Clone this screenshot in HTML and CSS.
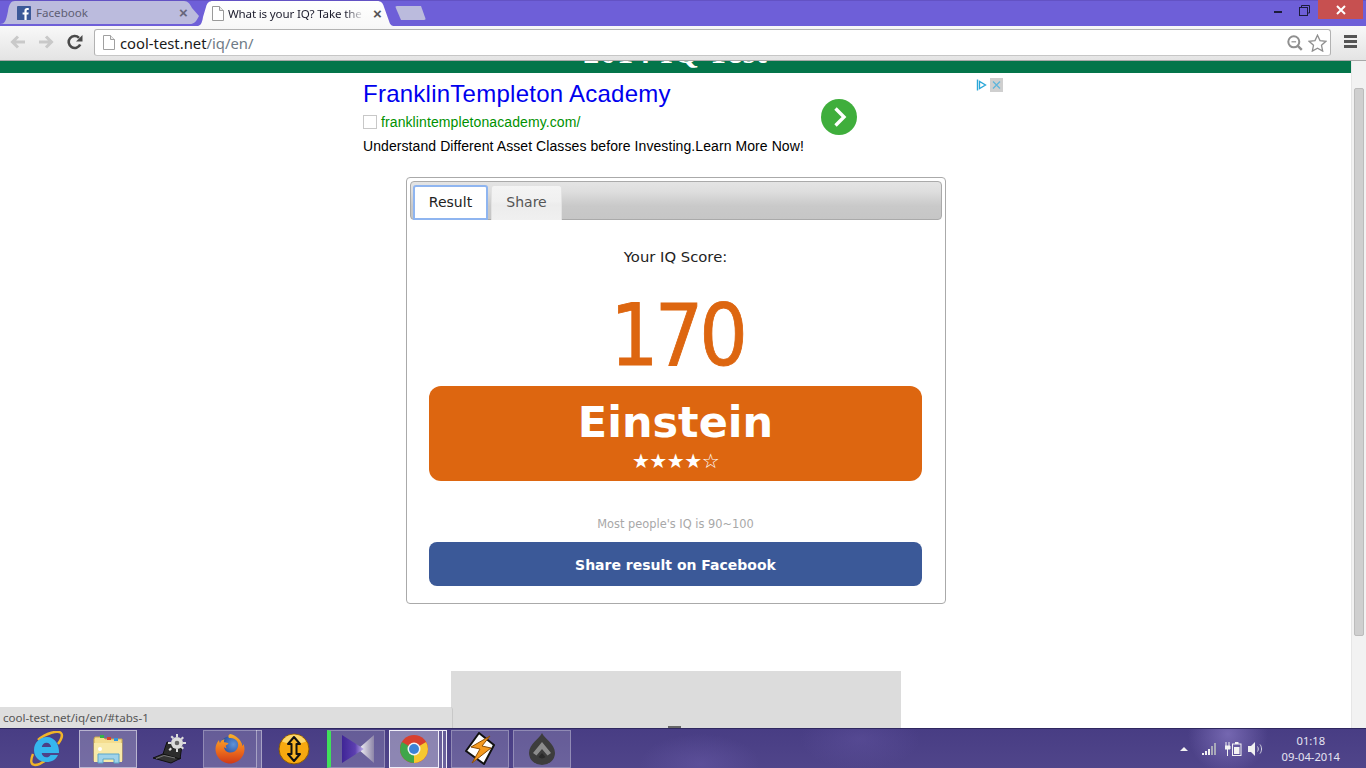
FILE: index.html
```html
<!DOCTYPE html>
<html lang="en">
<head>
<meta charset="utf-8">
<title>What is your IQ? Take the test</title>
<link rel="stylesheet" href="styles.css">
</head>
<body>
<div class="titlebar">
  <div class="tab tab-inactive">
    <svg class="favicon" width="14" height="14" viewBox="0 0 16 16"><rect width="16" height="16" rx="1" fill="#3b5998"/><path d="M11 16V9.8h2l.4-2.5H11V5.900c0-.8.3-1.200 1.200-1.200h1.200V2.400c-.4 0-1-.1-1.800-.1-1.900 0-3.100 1.100-3.100 3.300v1.700H6.400v2.500h2.100V16z" fill="#fff"/></svg>
    <span class="tab-label">Facebook</span>
    <span class="tab-close">×</span>
  </div>
  <div class="tab tab-active">
    <svg class="favicon" width="12" height="15" viewBox="0 0 12 15"><path d="M.5.500h7l4 4v10h-11z" fill="#fff" stroke="#9a9a9a"/><path d="M7.500.500v4h4" fill="#e8e8e8" stroke="#9a9a9a"/></svg>
    <span class="tab-label tab-fade">What is your IQ? Take the</span>
    <span class="tab-close dark">×</span>
  </div>
  <div class="newtab"></div>
  <div class="winctrls">
    <div class="win-min"></div>
    <svg class="win-restore" width="11" height="11" viewBox="0 0 11 11"><path d="M2.500 2.500V.5h8v7.500H8.500" fill="none" stroke="#1c1c3c"/><rect x=".5" y="2.500" width="8" height="8" fill="none" stroke="#1c1c3c"/></svg>
    <div class="win-close"><svg width="10" height="10" viewBox="0 0 10 10"><path d="M1 1l8 8M9 1l-8 8" stroke="#fff" stroke-width="2"/></svg></div>
  </div>
</div>

<div class="toolbar">
  <svg class="navicon first" width="18" height="16" viewBox="0 0 18 16"><path d="M16 8H4M9 2.500 3.500 8 9 13.500" fill="none" stroke="#c9c9c9" stroke-width="3"/></svg>
  <svg class="navicon" width="18" height="16" viewBox="0 0 18 16"><path d="M2 8h12M9 2.500 14.500 8 9 13.500" fill="none" stroke="#c9c9c9" stroke-width="3"/></svg>
  <svg class="navicon reload" width="16" height="16" viewBox="0 0 16 16"><path d="M13.200 10.500A6 6 0 1 1 12 3.800" fill="none" stroke="#4a4a4a" stroke-width="2.600"/><path d="M15.500 1v6.500H9z" fill="#4a4a4a"/></svg>
  <div class="omnibox">
    <svg class="pageicon" width="12" height="15" viewBox="0 0 12 15"><path d="M.5.500h7l4 4v10h-11z" fill="#fff" stroke="#a0a0a0"/><path d="M7.500.500v4h4" fill="#eee" stroke="#a0a0a0"/></svg>
    <span class="url">cool-test.net<span class="url-path">/iq/en/</span></span>
    <svg class="zoomicon" width="16" height="16" viewBox="0 0 16 16"><circle cx="6.800" cy="6.800" r="5.500" fill="none" stroke="#8f8f8f" stroke-width="2"/><path d="M10.800 10.800l4 4" stroke="#8f8f8f" stroke-width="2.400"/><path d="M4.500 6.800h4.600" stroke="#8f8f8f" stroke-width="1.200"/></svg>
    <svg class="staricon" width="19" height="18" viewBox="0 0 19 18"><path d="M9.500 1.200l2.500 5.400 5.900.7-4.400 4 1.200 5.800-5.200-2.900-5.200 2.900 1.200-5.800-4.400-4 5.900-.7z" fill="#fff" stroke="#8f8f8f" stroke-width="1.300"/></svg>
  </div>
  <div class="menuicon"><i></i><i></i><i></i></div>
</div>

<div class="viewport">
  <main class="page">
    <header class="band"><div class="band-title">2014 IQ Test</div></header>

    <section class="ad">
      <div class="ad-main">
        <a class="ad-title">FranklinTempleton Academy</a>
        <div class="ad-url-row"><span class="ad-check"></span><span class="ad-url">franklintempletonacademy.com/</span></div>
        <p class="ad-desc">Understand Different Asset Classes before Investing.Learn More Now!</p>
      </div>
      <div class="ad-go"><svg width="36" height="36" viewBox="0 0 36 36"><circle cx="18" cy="18" r="18" fill="#3fae3c"/><path d="M14.500 9.500 23 18l-8.500 8.500" fill="none" stroke="#fff" stroke-width="3.400"/></svg></div>
      <div class="ad-badges">
        <svg width="12" height="14" viewBox="0 0 12 14"><path d="M1.500 1.500v11" stroke="#2aa7d8" stroke-width="1.400"/><path d="M3.500 3.500v7l6-3.500z" fill="none" stroke="#2aa7d8" stroke-width="1.300"/></svg>
        <svg class="ad-x" width="13" height="14" viewBox="0 0 13 14"><rect width="13" height="14" fill="#cfcfcf"/><path d="M3 3.500l7 7M10 3.500l-7 7" stroke="#5fb6dc" stroke-width="1.300"/></svg>
      </div>
    </section>

    <section class="card">
      <nav class="tabs">
        <div class="card-tab card-tab-on">Result</div>
        <div class="card-tab card-tab-off">Share</div>
      </nav>
      <div class="result">
        <p class="score-label">Your IQ Score:</p>
        <p class="score">170</p>
        <div class="rank">
          <div class="rank-name">Einstein</div>
          <div class="rank-stars">★★★★☆</div>
        </div>
        <p class="note">Most people's IQ is 90~100</p>
        <div class="fb-share">Share result on Facebook</div>
      </div>
    </section>

    <div class="graybox"><span class="graybox-mark"></span></div>
  </main>
  <aside class="scrollbar"><div class="thumb"></div></aside>
  <div class="statusbubble">cool-test.net/iq/en/#tabs-1</div>
</div>

<footer class="taskbar">
  <div class="slot">
    <svg width="36" height="36" viewBox="0 0 36 36"><path d="M5 23C2 30 3 34 7 34c3 0 7-2 10-4.500M10 9C18 2 30-1 33 2c2 2 0 7-3 11" fill="none" stroke="#f0b429" stroke-width="2.400"/><path d="M19 6C12 6 6 11.500 6 19s5.500 12 12.500 12c5.500 0 9.500-2.500 11.500-7h-7.500c-1 1.600-2.300 2.300-4 2.300-2.600 0-4.500-1.700-4.800-4.300H31c.6-8-4-16-12-16zM13.800 16c.4-2.600 2.200-4.300 4.700-4.300s4.300 1.700 4.600 4.300z" fill="#35b6ee" fill-rule="evenodd"/></svg>
  </div>
  <div class="slot btn bright">
    <svg width="34" height="34" viewBox="0 0 34 34"><path d="M3 7l1-2h8l2 2h17v22H3z" fill="#f4dd8f" stroke="#c9a94d"/><rect x="9" y="3" width="4" height="3" fill="#34b34a"/><rect x="16" y="5" width="4" height="3" fill="#d8432f"/><rect x="23" y="6" width="4" height="3" fill="#2f94e0"/><path d="M3 11h28v19H3z" fill="#f8e9a8"/><path d="M7 31v-9h21v9h-5v-4H12v4z" fill="#9fd3ea" stroke="#5ba6c9"/><circle cx="9" cy="17" r="2" fill="#fff"/></svg>
  </div>
  <div class="slot btn-none">
    <svg width="34" height="30" viewBox="0 0 34 30"><path d="M0 24l10-4 18 4-10 5z" fill="#333" stroke="#111"/><path d="M10 20l4-12 15 3-2 14z" fill="#2c2c2c" stroke="#111"/><path d="M3 24.500l8-3 11 2.500" fill="none" stroke="#777" stroke-width="1"/><g fill="#dcdcdc"><circle cx="24" cy="9" r="6"/><path d="M23 0h2v3h-2zM23 15h2v3h-2zM15 8h3v2h-3zM30 8h3v2h-3zM17.500 3l1.500-1.500 2 2-1.500 1.500zM27.500 13.500l1.500-1.500 2 2-1.500 1.500zM27.500 4.500l1.500 1.500 2-2-1.500-1.500zM17.500 13.500l1.500 1.500-2 2-1.500-1.500z"/></g><circle cx="24" cy="9" r="2.300" fill="#666"/></svg>
  </div>
  <div class="slot btn stack">
    <svg width="32" height="32" viewBox="0 0 32 32"><defs><radialGradient id="ffg" cx=".6" cy=".35" r=".6"><stop offset="0" stop-color="#5f93d8"/><stop offset="1" stop-color="#1d3f8f"/></radialGradient><linearGradient id="fff" x1="0" y1="0" x2="0" y2="1"><stop offset="0" stop-color="#f7b32a"/><stop offset=".55" stop-color="#ee6f1d"/><stop offset="1" stop-color="#cf3a17"/></linearGradient></defs><circle cx="17" cy="15" r="12" fill="url(#ffg)"/><path d="M16 1c-2 1-2 3-1 4 3-.5 6 .5 8 3 1.500 2 1.500 5 .5 7-1.500 3.500-5 5-8.500 4.500-3-.5-5-3-5-5.500 1 1 2 1.500 3 1.200-1-.7-1.500-2-1-3 1-.2 2-1 2.500-2-2-1-3.500-1-4.500-1-.2-1 0-2.200.5-3C8 6.500 6.500 8 6 10c-.5-.6-1-2-1-3C2.500 10 1.500 13 1.500 16 1.500 24 8 30.500 16 30.500S30.500 24 30.500 16c0-1.500-.3-3.500-1-5-.3 1-.7 1.500-1 2C27.500 7 22 2 16 1z" fill="url(#fff)"/></svg>
  </div>
  <div class="slot btn-none">
    <svg width="32" height="32" viewBox="0 0 32 32"><circle cx="16" cy="16" r="15" fill="#f7a90f" stroke="#8a5a05"/><path d="M16 1.500a14.500 14.500 0 0 1 12 7c-7 3-17 3-24 0a14.500 14.500 0 0 1 12-7z" fill="#fcd668"/><path d="M16 4l6 7h-3.500v10H22l-6 7-6-7h3.500V11H10z" fill="#f9b62a" stroke="#111" stroke-width="2" stroke-linejoin="round"/></svg>
  </div>
  <div class="slot btn green">
    <svg width="32" height="30" viewBox="0 0 32 30"><defs><linearGradient id="vsa" x1="0" x2="1"><stop offset="0" stop-color="#3f2596"/><stop offset=".6" stop-color="#5c3fb0"/><stop offset="1" stop-color="#c6b8ee"/></linearGradient><linearGradient id="vsb" x1="0" x2="1"><stop offset="0" stop-color="#fff"/><stop offset="1" stop-color="#8d85a8"/></linearGradient></defs><path d="M32 1 16 15l16 14z" fill="url(#vsb)"/><path d="M0 1l22 14L0 29z" fill="url(#vsa)"/></svg>
  </div>
  <div class="slot btn active stack2">
    <svg width="30" height="30" viewBox="0 0 30 30"><circle cx="15" cy="15" r="14" fill="#d8402f"/><path d="M15 15 27.100 8A14 14 0 0 1 15 29z" fill="#f6c82f"/><path d="M15 15 15 29A14 14 0 0 1 2.900 8z" fill="#3fa64a"/><circle cx="15" cy="15" r="6.500" fill="#f4f4f4"/><circle cx="15" cy="15" r="5" fill="#3c82d6"/></svg>
  </div>
  <div class="slot btn">
    <svg width="32" height="34" viewBox="0 0 32 34"><path d="M15 1l15 12-10 19L2 19z" fill="#fff" stroke="#111" stroke-width="2" stroke-linejoin="round"/><path d="M26 4 7 15l9 2-8 14 19-15-9-2z" fill="#f59a1e" stroke="#8a4d05"/></svg>
  </div>
  <div class="slot btn">
    <svg width="28" height="32" viewBox="0 0 28 32"><path d="M14 0c2 5 13 11 13 20a13 12 0 0 1-26 0C1 11 12 5 14 0z" fill="#3d3d3d"/><path d="M14 9l9 11-3.500 2.500L14 16l-5.500 6.500L5 20z" fill="#8c8c8c"/><path d="M14 20l3.500 4a5 5 0 0 1-7 0z" fill="#2a2a2a"/></svg>
  </div>

  <div class="tray">
    <span class="tray-caret"></span>
    <svg class="tray-signal" width="15" height="12" viewBox="0 0 15 12"><g fill="#f2f2f2"><rect x="0" y="10" width="2" height="2"/><rect x="3" y="8" width="2" height="4"/><rect x="6" y="6" width="2" height="6"/></g><g fill="#a9a9b8"><rect x="9" y="3" width="2" height="9"/><rect x="12" y="0" width="2" height="12"/></g></svg>
    <svg class="tray-power" width="17" height="14" viewBox="0 0 17 14"><path d="M1 0v4M4 0v4M0 4h5v3H0zM2.500 7v7" stroke="#f4f4f4" fill="#f4f4f4"/><rect x="7.500" y="2" width="8.500" height="11.500" fill="none" stroke="#f4f4f4"/><rect x="10" y="0" width="3.500" height="2" fill="#f4f4f4"/><rect x="9" y="5" width="5.500" height="7" fill="#f4f4f4"/></svg>
    <svg class="tray-sound" width="16" height="14" viewBox="0 0 16 14"><path d="M0 4h3l4-4v14l-4-4H0z" fill="#f0f0f0"/><path d="M9.500 4.500c1 1.500 1 3.500 0 5M12 2.500c2 2.500 2 6.500 0 9" fill="none" stroke="#d5d5e2"/></svg>
    <div class="clock"><span>01:18</span><span>09-04-2014</span></div>
  </div>
</footer>
</body>
</html>
```

FILE: styles.css
```css
* { box-sizing: border-box; }
html, body { margin: 0; padding: 0; }
body {
  width: 1366px;
  height: 768px;
  overflow: hidden;
  display: flex;
  flex-direction: column;
  background: #fff;
  font-family: "Noto Sans", sans-serif;
}
p { margin: 0; }

/* browser title bar */
.titlebar {
  height: 26px;
  flex: none;
  display: flex;
  background: #6e5fd8;
  border-top: 1px solid #6352c4;
}
.tab {
  display: flex;
  align-items: center;
  font-size: 11.6px;
}
.tab-inactive {
  width: 199px;
  height: 23px;
  padding: 0 0 0 17px;
  background: #bbbbdd;
  clip-path: path("M0 23C5 23 6 20 8 10C9 3 11 0 15 0H184C188 0 190 3 192 7L199 15C196 21 194 23 190 23Z");
  color: #5e5e74;
}
.tab-active {
  width: 197px;
  height: 25px;
  margin-left: -2px;
  padding: 0 0 1px 13px;
  background: linear-gradient(#ffffff, #f8f8f8);
  clip-path: path("M0 25C3 25 5 23 6 16L9 6C10 2 12 0 16 0H180C184 0 186 2 187 6L192 20C193 24 195 25 197 25Z");
  color: #1c1c2c;
}
.favicon { flex: none; }
.tab-active .favicon { margin-left: 2px; }
.tab-label {
  margin-left: 5px;
  white-space: nowrap;
  flex: none;
}
.tab-inactive .tab-label { width: 136px; }
.tab-active .tab-label {
  margin-left: 4px;
  width: 136px;
  letter-spacing: -.17px;
}
.tab-fade {
  -webkit-mask-image: linear-gradient(90deg, #000 86%, transparent 100%);
  mask-image: linear-gradient(90deg, #000 86%, transparent 100%);
}
.tab-close {
  margin-left: 7px;
  font: bold 15px/1 "Liberation Sans", sans-serif;
  color: #66667a;
}
.tab-close.dark { margin-left: 9px; color: #555; }
.newtab {
  width: 31px;
  height: 14px;
  margin: 5px 0 0 1px;
  background: #bbbbdd;
  clip-path: polygon(0 0, 26px 0, 31px 14px, 6px 14px);
  border-radius: 2px;
}
.winctrls {
  margin-left: auto;
  display: flex;
  align-items: flex-start;
  padding-right: 3px;
}
.win-min {
  width: 8px;
  height: 2px;
  margin: 10px 17px 0 0;
  background: #1c1c3c;
}
.win-restore { margin: 4px 8px 0 0; }
.win-close {
  width: 45px;
  margin-top: -1px;
  background: #c75050;
  display: flex;
  align-items: center;
  justify-content: center;
  height: 19px;
}

/* toolbar */
.toolbar {
  height: 35px;
  flex: none;
  display: flex;
  align-items: flex-start;
  background: linear-gradient(#f8f8f8, #e4e4e4);
  border-bottom: 1px solid #a8a8a8;
}
.navicon { margin: 8px 0 0 10px; flex: none; }
.navicon.first { margin-left: 9px; }
.navicon.reload { margin-left: 12px; }
.omnibox {
  width: 1237px;
  height: 27px;
  margin: 3px 0 0 11px;
  display: flex;
  align-items: center;
  background: #fff;
  border: 1px solid #b2b2b2;
  border-bottom-color: #c6c6c6;
  border-radius: 3px;
  flex: none;
}
.pageicon { margin-left: 8px; flex: none; }
.url {
  margin-left: 5px;
  font-size: 14.8px;
  color: #1a1a1a;
  white-space: nowrap;
}
.url-path { color: #6f7b86; }
.zoomicon { margin-left: auto; }
.staricon { margin: 0 3px 0 5px; }
.menuicon {
  margin: 9px 0 0 13px;
  width: 13px;
  display: flex;
  flex-direction: column;
  gap: 2px;
}
.menuicon i {
  display: block;
  height: 3px;
  background: #555;
}

/* web page */
.viewport {
  position: relative;
  flex: 1;
  display: flex;
  min-height: 0;
  overflow: hidden;
}
.page {
  width: 1351px;
  flex: none;
  height: 100%;
  overflow: hidden;
}
.band {
  height: 12px;
  background: #03754a;
  overflow: hidden;
}
.band-title {
  margin-top: -24px;
  text-align: center;
  font: bold 32px/30px "Liberation Serif", serif;
  color: #fff;
  letter-spacing: 1px;
}
.ad {
  width: 640px;
  height: 104px;
  margin-left: 363px;
  display: flex;
  align-items: flex-start;
  font-family: "Liberation Sans", sans-serif;
}
.ad-main { width: 458px; flex: none; }
.ad-title {
  display: block;
  margin-top: 6px;
  font-size: 24px;
  line-height: 30px;
  letter-spacing: .25px;
  color: #0000ee;
  white-space: nowrap;
}
.ad-url-row {
  display: flex;
  align-items: center;
  margin-top: 5px;
  height: 16px;
}
.ad-check {
  width: 14px;
  height: 14px;
  border: 1px solid #c8c8c8;
  flex: none;
}
.ad-url {
  margin-left: 4px;
  font-size: 14px;
  letter-spacing: .1px;
  color: #009100;
}
.ad-desc {
  margin-top: 7px;
  font-size: 14px;
  line-height: 18px;
  letter-spacing: .08px;
  color: #000;
  white-space: nowrap;
}
.ad-go { margin-top: 26px; line-height: 0; }
.ad-badges {
  display: flex;
  align-items: flex-start;
  margin: 5px 0 0 auto;
  gap: 2px;
  line-height: 0;
}
.card {
  width: 540px;
  height: 427px;
  margin-left: 406px;
  padding: 3px;
  background: #fff;
  border: 1px solid #aaa;
  border-radius: 4px;
  font-family: "DejaVu Sans", Verdana, sans-serif;
}
.tabs {
  height: 39px;
  padding: 3px 0 0 2px;
  display: flex;
  align-items: flex-start;
  gap: 3px;
  background: linear-gradient(#e4e4e4 0%, #dedede 25%, #c9c9c9 65%, #c6c6c6 100%);
  border: 1px solid #aaa;
  border-radius: 4px;
}
.card-tab {
  height: 35px;
  margin-bottom: -1px;
  padding-bottom: 2px;
  font-size: 14px;
  display: flex;
  align-items: center;
  justify-content: center;
  border-radius: 3px 3px 0 0;
}
.card-tab-on {
  width: 75px;
  background: #fff;
  color: #222;
  border: 2px solid #8fb5f0;
}
.card-tab-off {
  width: 71px;
  background: linear-gradient(#f4f4f4 0%, #f0f0f0 45%, #ececec 55%, #f0f0f0 100%);
  color: #555;
  border: 1px solid #e2e2e2;
  border-bottom: 0;
}
.result {
  padding: 0 20px 0 19px;
  display: flex;
  flex-direction: column;
  text-align: center;
}
.score-label {
  margin-top: 28px;
  font-size: 14.8px;
  line-height: 18px;
  color: #222;
}
.score {
  margin-top: 20px;
  height: 96px;
  padding-left: 3px;
  font-family: "DejaVu Sans Condensed", "DejaVu Sans", sans-serif;
  font-size: 85px;
  line-height: 100px;
  letter-spacing: -4px;
  -webkit-text-stroke: .8px #dd6610;
  color: #dd6610;
}
.rank {
  height: 95px;
  margin-top: 4px;
  background: #dd6610;
  border-radius: 12px;
  color: #fff;
}
.rank-name {
  padding-top: 10px;
  font-size: 43px;
  line-height: 53px;
  font-weight: bold;
}
.rank-stars {
  font-size: 20px;
  line-height: 24px;
  letter-spacing: -.5px;
}
.note {
  margin-top: 36px;
  font-size: 11.4px;
  line-height: 14px;
  color: #a8a8a8;
}
.fb-share {
  height: 44px;
  margin-top: 11px;
  background: #3b5998;
  border-radius: 8px;
  color: #fff;
  font-size: 14px;
  font-weight: bold;
  line-height: 46px;
}
.graybox {
  width: 450px;
  height: 120px;
  margin: 67px 0 0 451px;
  background: #dcdcdc;
  padding: 55px 0 0 217px;
}
.graybox-mark {
  display: block;
  width: 13px;
  height: 3px;
  background: #666;
}
.scrollbar {
  flex: 1;
  background: #f2f2f2;
  border-left: 1px solid #e6e6e6;
  padding: 27px 2px 0 2px;
}
.thumb {
  width: 10px;
  height: 548px;
  background: #cfcfcf;
  border: 1px solid #bcbcbc;
  border-radius: 2px;
}
.statusbubble {
  position: absolute;
  left: 0;
  bottom: 0;
  width: 453px;
  height: 21px;
  padding-left: 3px;
  background: #dedede;
  border: solid #c8c8c8;
  border-width: 0 1px 0 0;
  border-top-right-radius: 3px;
  color: #555;
  font-size: 11.6px;
  line-height: 22px;
}

/* windows taskbar */
.taskbar {
  height: 40px;
  flex: none;
  display: flex;
  gap: 4px;
  padding: 1px 0 1px 17px;
  border-top: 1px solid #2f2860;
  background:
    radial-gradient(ellipse 40px 40px at 1228px 5px, rgba(140,125,200,.65), transparent),
    radial-gradient(ellipse 60px 30px at 700px 35px, rgba(110,95,175,.4), transparent),
    radial-gradient(ellipse 60px 30px at 860px 10px, rgba(110,95,175,.3), transparent),
    linear-gradient(#483d84, #50458a);
}
.slot {
  position: relative;
  width: 58px;
  height: 38px;
  display: flex;
  align-items: center;
  justify-content: center;
  flex: none;
}
.btn {
  background: rgba(255,255,255,.16);
  border: 1px solid rgba(255,255,255,.28);
}
.btn.bright {
  background: rgba(255,255,255,.22);
  border: 1px solid rgba(255,255,255,.5);
}
.btn.green { border-left: 4px solid #3fe05a; }
.btn.active {
  background: rgba(255,255,255,.36);
  border: 1px solid #f0eef8;
}
.stack { width: 54px; margin-right: 4px; }
.stack::after {
  content: "";
  position: absolute;
  top: -1px;
  right: -6px;
  width: 5px;
  height: 38px;
  background: rgba(255,255,255,.2);
  border: 1px solid rgba(255,255,255,.4);
  border-left: 0;
}
.stack2 { width: 50px; margin-right: 8px; }
.stack2::before,
.stack2::after {
  content: "";
  position: absolute;
  top: -1px;
  width: 3px;
  height: 38px;
  background: rgba(255,255,255,.16);
  border: 1px solid #f0eef8;
}
.stack2::before { right: -5px; }
.stack2::after { right: -9px; }
.tray {
  margin-left: auto;
  display: flex;
  align-items: center;
  padding-right: 26px;
}
.tray-caret {
  width: 0;
  height: 0;
  border: 4px solid transparent;
  border-top: 0;
  border-bottom: 4px solid #f2f2f2;
  margin-right: 14px;
}
.tray-signal { margin-right: 8px; }
.tray-power { margin-right: 6px; }
.tray-sound { margin-right: 18px; }
.clock {
  display: flex;
  flex-direction: column;
  align-items: center;
  color: #e6e4f2;
  font-size: 11.2px;
  line-height: 16px;
}
```
